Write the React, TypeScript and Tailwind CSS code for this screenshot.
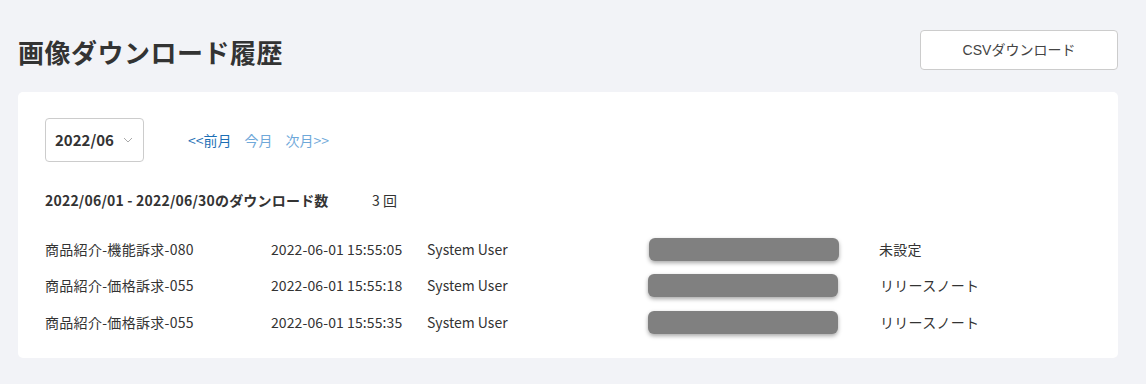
import React from "react";

const rows = [
  { name: "商品紹介-機能訴求-080", date: "2022-06-01 15:55:05", user: "System User", label: "未設定", off: "ml-[1px]" },
  { name: "商品紹介-価格訴求-055", date: "2022-06-01 15:55:18", user: "System User", label: "リリースノート", off: "" },
  { name: "商品紹介-価格訴求-055", date: "2022-06-01 15:55:35", user: "System User", label: "リリースノート", off: "" },
];

export default function App() {
  return (
    <div
      className="w-[1146px] h-[384px] bg-[#f2f3f7] text-[#333333] overflow-hidden"
      style={{ fontFamily: '"Noto Sans CJK JP", "Noto Sans", sans-serif' }}
    >
      <div className="flex items-start justify-between pl-[18px] pr-[28px] pt-[30px]">
        <h1 className="text-[26px] font-bold leading-[40px] mt-[2px] tracking-[0.5px]">画像ダウンロード履歴</h1>
        <button
          className="w-[198px] h-[40px] bg-white border border-[#cccccc] rounded-[4px] text-[14px] font-normal text-[#444444]"
          style={{ fontFamily: '"Liberation Sans", "Noto Sans CJK JP", sans-serif' }}
        >
          CSVダウンロード
        </button>
      </div>
      <div className="mx-[18px] mt-[20px] w-[1100px] h-[266px] bg-white rounded-[5px] pl-[27px] pt-[26px]">
        <div className="flex items-center">
          <div className="w-[99px] h-[44px] border border-[#cccccc] rounded-[4px] flex items-center pl-[9px] pr-[10px] justify-between">
            <span className="text-[15px] font-bold">2022/06</span>
            <svg width="10" height="6" viewBox="0 0 10 6" fill="none" stroke="#aaaaaa" strokeWidth="1">
              <path d="M1 1 L5 5 L9 1" />
            </svg>
          </div>
          <div className="flex gap-[13px] ml-[44px] text-[14px]">
            <span className="text-[#1c6fb5]">&lt;&lt;前月</span>
            <span className="text-[#6ea8d9]">今月</span>
            <span className="text-[#6ea8d9]">次月&gt;&gt;</span>
          </div>
        </div>
        <div className="flex mt-[27px] text-[14px] leading-[22px]">
          <span className="font-bold w-[327px] tracking-[0.2px]">2022/06/01 - 2022/06/30のダウンロード数</span>
          <span>3 回</span>
        </div>
        <div className="mt-[27px] flex flex-col gap-[14.5px] text-[14px]">
          {rows.map((r, i) => (
            <div key={i} className="flex items-center h-[22px]">
              <span className="w-[226px] tracking-[0.3px]">{r.name}</span>
              <span className="w-[156px] tracking-[0.1px]">{r.date}</span>
              <span className="w-[221px]">{r.user}</span>
              <div className={`w-[190px] h-[23px] bg-[#808080] rounded-[6px] shadow-[0_2px_4px_rgba(0,0,0,0.35)] ${r.off}`} />
              <span className={`tracking-[0.3px] ${i === 0 ? "ml-[40px]" : "ml-[42px]"}`}>{r.label}</span>
            </div>
          ))}
        </div>
      </div>
    </div>
  );
}
